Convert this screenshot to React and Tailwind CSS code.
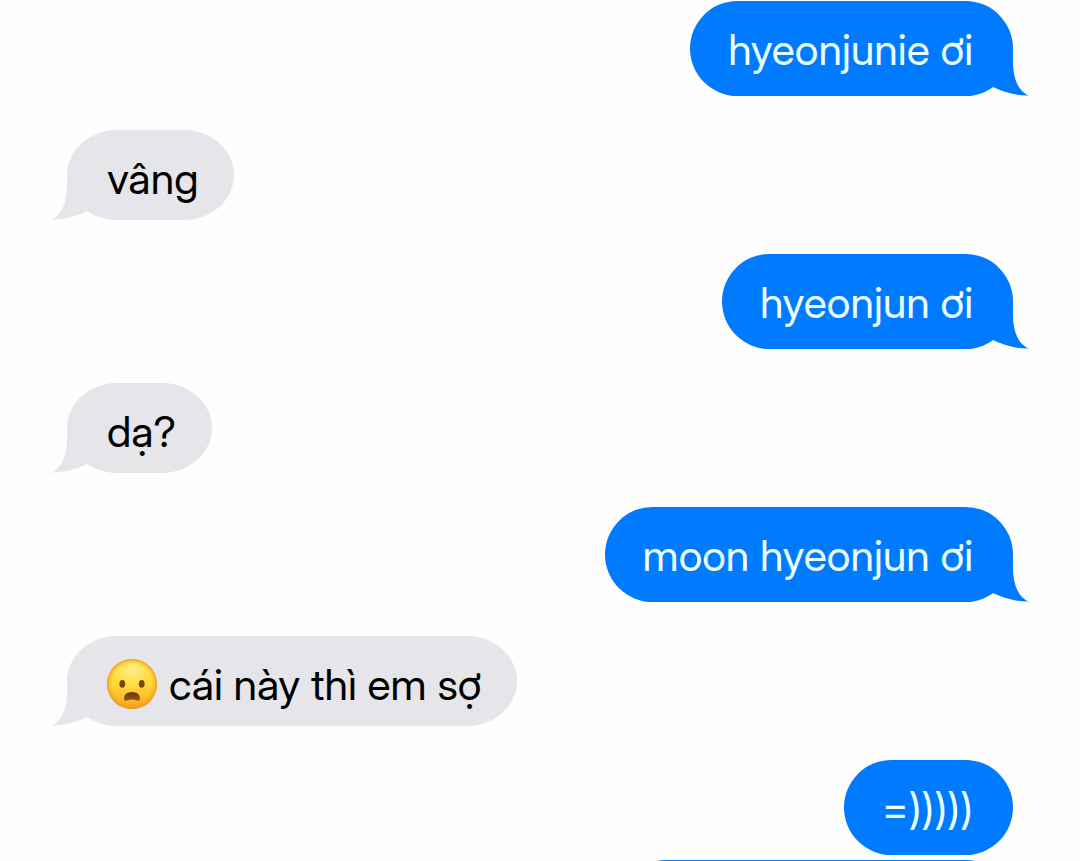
import clsx from 'clsx';

const MESSAGES = [
  { id: 1, from: 'me', text: 'hyeonjunie ơi', tail: true },
  { id: 2, from: 'them', text: 'vâng', tail: true },
  { id: 3, from: 'me', text: 'hyeonjun ơi', tail: true },
  { id: 4, from: 'them', text: 'dạ?', tail: true },
  { id: 5, from: 'me', text: 'moon hyeonjun ơi', tail: true },
  { id: 6, from: 'them', text: 'cái này thì em sợ', emoji: true, tail: true },
  { id: 7, from: 'me', text: '=)))))' },
];

function Tail({ mine }) {
  return (
    <svg
      viewBox="0 0 46 48"
      aria-hidden="true"
      className={clsx(
        'absolute bottom-0 h-12 w-[46px] fill-current',
        mine ? '-right-4 text-[#007aff]' : '-left-4 -scale-x-100 text-[#e5e5ea]'
      )}
    >
      <path d="M10 0H30V14C30 30 35 43 45.500 47.500C34 48 20 44 10 39Z" />
    </svg>
  );
}

function FrowningFace() {
  return (
    <svg viewBox="0 0 50 50" role="img" aria-label="frowning face with open mouth" className="size-[50px] shrink-0">
      <defs>
        <linearGradient id="face" x1="0" y1="0" x2="0" y2="1">
          <stop offset="0" stopColor="#ffe860" />
          <stop offset="0.5" stopColor="#ffda38" />
          <stop offset="0.8" stopColor="#fdbb26" />
          <stop offset="1" stopColor="#f79a1c" />
        </linearGradient>
        <radialGradient id="rim" cx="0.5" cy="0.5" r="0.5">
          <stop offset="0" stopColor="#fff27a" stopOpacity="0.3" />
          <stop offset="0.78" stopColor="#f9b020" stopOpacity="0" />
          <stop offset="0.92" stopColor="#f2a01c" stopOpacity="0.5" />
          <stop offset="1" stopColor="#e8901a" stopOpacity="0.95" />
        </radialGradient>
        <radialGradient id="shine" cx="0.5" cy="0.5" r="0.5">
          <stop offset="0" stopColor="#fffba8" stopOpacity="0.85" />
          <stop offset="1" stopColor="#ffee70" stopOpacity="0" />
        </radialGradient>
        <linearGradient id="mouth" x1="0" y1="0" x2="0" y2="1">
          <stop offset="0" stopColor="#6b3508" />
          <stop offset="1" stopColor="#94580f" />
        </linearGradient>
      </defs>
      <circle cx="25" cy="25" r="25" fill="url(#face)" />
      <ellipse cx="25" cy="13" rx="19" ry="12" fill="url(#shine)" />
      <circle cx="25" cy="25" r="25" fill="url(#rim)" />
      <ellipse cx="15.300" cy="24.800" rx="2.900" ry="3.900" fill="#7a4509" />
      <ellipse cx="34.700" cy="24.800" rx="2.900" ry="3.900" fill="#7a4509" />
      <path d="M17 39.500C17 35.800 20 33 25 33S33 35.800 33 39.500C33 42 31.500 42 29.500 41.200C26.500 40.400 23.500 40.400 20.500 41.200C18.500 42 17 42 17 39.500Z" fill="url(#mouth)" />
    </svg>
  );
}

function Bubble({ from, text, emoji, tail }) {
  const mine = from === 'me';
  return (
    <li className={clsx('flex', mine ? 'justify-end' : 'justify-start')}>
      <div
        className={clsx(
          'relative flex max-w-[75%] items-center gap-3 text-[43px] leading-[50px]',
          mine
            ? 'rounded-[48px] bg-[#007aff] pt-[23px] pr-10 pb-[22px] pl-[38px] text-[#ebffff]'
            : 'rounded-[50px/45px] bg-[#e5e5ea] pt-[23px] pr-9 pb-[17px] pl-10 text-black'
        )}
      >
        {tail && <Tail mine={mine} />}
        {emoji && <FrowningFace />}
        <p className="relative">{text}</p>
      </div>
    </li>
  );
}

export default function App() {
  return (
    <main className="h-screen overflow-hidden bg-[#fefefe] pt-px pr-[67px] pl-[67px] font-['Inter_Display',Inter,sans-serif]">
      <ul className="flex flex-col gap-[34px]">
        {MESSAGES.map((m) => (
          <Bubble key={m.id} {...m} />
        ))}
      </ul>
      {/* next bubble, mostly below the fold */}
      <div className="mt-[5px] ml-auto h-[95px] w-[394px] rounded-[48px] bg-[#007aff]" />
    </main>
  );
}
